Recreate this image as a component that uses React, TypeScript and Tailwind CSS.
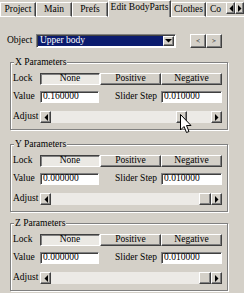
import React from 'react';

const raised =
  'bg-[#d4d0c8] border border-t-white border-l-white border-r-[#404040] border-b-[#404040] shadow-[inset_-1px_-1px_0_#808080]';
const pressed =
  'bg-[#ebe9e4] border border-t-[#404040] border-l-[#404040] border-r-white border-b-white shadow-[inset_1px_1px_0_#808080]';
const sunken =
  'bg-white border border-t-[#808080] border-l-[#808080] border-r-white border-b-white shadow-[inset_1px_1px_0_#404040]';

function Tri({ dir }: { dir: 'l' | 'r' | 'd' }) {
  if (dir === 'd')
    return (
      <svg width="7" height="4" viewBox="0 0 7 4">
        <polygon points="0,0 7,0 3.5,3.5" fill="#000" />
      </svg>
    );
  return (
    <svg width="4" height="7" viewBox="0 0 4 7">
      <polygon points={dir === 'l' ? '4,0 4,7 0.5,3.5' : '0,0 0,7 3.5,3.5'} fill="#000" />
    </svg>
  );
}

function Tab({ label, w, active }: { label: string; w: string; active?: boolean }) {
  if (active)
    return (
      <div className={`${w} h-[17px] relative z-10 flex items-center justify-center pb-[2px] bg-[#d4d0c8] border-t border-l border-white border-r border-r-[#404040] shadow-[inset_-1px_0_0_#808080] whitespace-nowrap`}>
        {label}
      </div>
    );
  return (
    <div className={`${w} mt-[2px] h-[15px] flex items-center justify-center border-t border-l border-t-white border-l-white border-r border-r-[#404040] border-b border-b-white shadow-[inset_-1px_0_0_#808080] overflow-hidden whitespace-nowrap`}>
      {label}
    </div>
  );
}

function Group({ axis, value, thumb, className }: { axis: string; value: string; thumb: number | null; className: string }) {
  return (
    <div className={`relative ml-[10px] w-[218px] h-[68px] border border-[#808080] shadow-[inset_1px_1px_0_#fff,1px_1px_0_#fff] pt-[10px] pl-[2px] ${className}`}>
      <span className="absolute -top-[7px] left-[3px] px-[1px] bg-[#d4d0c8] leading-[12px]">{axis} Parameters</span>

      <div className="flex items-center h-[12px]">
        <span className="w-[27px]">Lock</span>
        <div className={`w-[60px] h-[12px] flex items-center justify-center ${pressed}`}>None</div>
        <div className={`w-[61px] h-[12px] flex items-center justify-center ${raised}`}>Positive</div>
        <div className={`w-[61px] h-[12px] flex items-center justify-center ${raised}`}>Negative</div>
      </div>

      <div className="flex items-center h-[12px] mt-[6px]">
        <span className="w-[27px]">Value</span>
        <div className={`w-[59px] h-[12px] flex items-center pl-[2px] ${sunken}`}>{value}</div>
        <span className="w-[62px] text-right pr-[4px]">Slider Step</span>
        <div className={`w-[61px] h-[12px] flex items-center pl-[2px] ${sunken}`}>0.010000</div>
      </div>

      <div className="flex items-center h-[12px] mt-[8px]">
        <span className="w-[27px]">Adjust</span>
        <div className="w-[182px] h-[12px] flex bg-[#eceae6]">
          <div className={`w-[11px] h-[12px] flex items-center justify-center ${raised}`}>
            <Tri dir="l" />
          </div>
          <div className="flex-1 flex">
            {thumb === null ? (
              <>
                <div className="flex-1" />
                <div className={`w-[12px] h-[12px] ${raised}`} />
              </>
            ) : (
              <div className={`w-[11px] h-[12px] ${raised}`} style={{ marginLeft: thumb }} />
            )}
          </div>
          <div className={`w-[11px] h-[12px] flex items-center justify-center ${raised}`}>
            <Tri dir="r" />
          </div>
        </div>
      </div>
    </div>
  );
}

export default function App() {
  return (
    <div className="relative w-[244px] h-[293px] overflow-hidden bg-[#d4d0c8] text-black text-[9.5px] leading-none font-['Liberation_Serif','Times_New_Roman',serif]">
      {/* tab strip */}
      <div className="flex h-[17px] relative">
        <Tab label="Project" w="w-[36px]" />
        <Tab label="Main" w="w-[36px]" />
        <Tab label="Prefs" w="w-[36px]" />
        <Tab label="Edit BodyParts" w="w-[63px]" active />
        <Tab label="Clothes" w="w-[35px]" />
        <div className="w-[38px] mt-[2px] h-[15px] flex items-center pl-[3px] border-t border-l border-t-white border-l-white border-b border-b-white overflow-hidden whitespace-nowrap">
          Co
        </div>
        <div className="absolute right-0 top-[2px] flex">
          <div className={`w-[9px] h-[12px] flex items-center justify-center ${raised}`}>
            <Tri dir="l" />
          </div>
          <div className={`w-[9px] h-[12px] flex items-center justify-center ${raised}`}>
            <Tri dir="r" />
          </div>
        </div>
      </div>

      {/* object selector */}
      <div className="flex items-center h-[14px] mt-[17px]">
        <span className="w-[36px] pl-[7px]">Object</span>
        <div className={`w-[140px] h-[14px] flex p-[1px] ${sunken}`}>
          <div className="flex-1 bg-[#0b1b6e] text-white flex items-center pl-[2px]">Upper body</div>
          <div className={`w-[11px] flex items-center justify-center ${raised}`}>
            <Tri dir="d" />
          </div>
        </div>
        <div className={`ml-[14px] w-[16px] h-[14px] flex items-center justify-center text-[7px] ${raised}`}>&lt;</div>
        <div className={`w-[16px] h-[14px] flex items-center justify-center text-[7px] ${raised}`}>&gt;</div>
      </div>

      <Group axis="X" value="0.160000" thumb={125} className="mt-[14px]" />
      <Group axis="Y" value="0.000000" thumb={null} className="mt-[14px]" />
      <Group axis="Z" value="0.000000" thumb={null} className="mt-[11px]" />

      {/* mouse pointer */}
      <svg className="absolute left-[180px] top-[114px]" width="13" height="20" viewBox="0 0 13 20">
        <path d="M0.5,0.5 L0.5,16 L4,12.5 L6.5,18.5 L9,17.5 L6.5,11.5 L11,11.5 Z" fill="#fff" stroke="#000" strokeWidth="1" />
      </svg>
    </div>
  );
}
